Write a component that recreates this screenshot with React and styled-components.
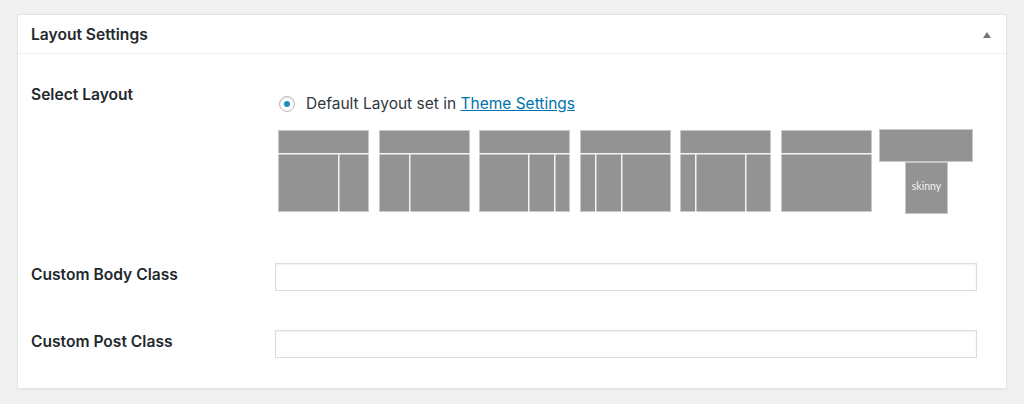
import React from 'react'
import styled, { createGlobalStyle } from 'styled-components'

const GlobalStyle = createGlobalStyle`
  body {
    margin: 0;
    background: #f1f1f1;
    font-family: Inter, "Liberation Sans", Arial, sans-serif;
    color: #23282d;
  }
`

const Page = styled.div`
  padding: 14px 17px 20px 17px;
`

const Panel = styled.div`
  width: 988px;
  background: #fff;
  border: 1px solid #e5e5e5;
  box-shadow: 0 1px 1px rgba(0, 0, 0, 0.04);
`

const Header = styled.div`
  box-sizing: border-box;
  height: 39px;
  display: flex;
  align-items: center;
  justify-content: space-between;
  padding: 2px 15px 0 13px;
  border-bottom: 1px solid #eee;
`

const Title = styled.h2`
  margin: 0;
  font-size: 15.6px;
  font-weight: 600;
  line-height: 20px;
`

const Toggle = styled.span`
  width: 0;
  height: 0;
  border-left: 4px solid transparent;
  border-right: 4px solid transparent;
  border-bottom: 6px solid #72777c;
`

const Body = styled.div`
  padding: 0 30px 30px 13px;
`

const Row = styled.div`
  display: grid;
  grid-template-columns: 244px 1fr;
  align-items: start;
  margin-top: ${ p => p.$top }px;
`

const Label = styled.div`
  font-size: 15.6px;
  font-weight: 600;
  line-height: 20px;
  padding-top: ${ p => p.$pad }px;
`

const Choices = styled.div`
  padding: 40px 0 0 3px;
`

const RadioLine = styled.label`
  display: flex;
  align-items: center;
  gap: 11px;
  font-size: 15.5px;
  line-height: 20px;
  color: #32373c;
`

const Radio = styled.span`
  width: 14px;
  height: 14px;
  margin-left: 1px;
  border: 1px solid #b4b9be;
  border-radius: 50%;
  box-shadow: inset 0 1px 2px rgba(0, 0, 0, 0.1);
  display: flex;
  align-items: center;
  justify-content: center;

  &::after {
    content: '';
    width: 6px;
    height: 6px;
    border-radius: 50%;
    background: #1e8cbe;
  }
`

const Link = styled.a`
  color: #0073aa;
  text-decoration: underline;
`

const Thumbs = styled.div`
  display: flex;
  align-items: flex-start;
  gap: 9.6px;
  margin-top: 16px;
`

const Skinny = styled.svg`
  margin: -1px 0 0 -3px;
`

const Input = styled.input`
  box-sizing: border-box;
  width: 702px;
  height: 28px;
  margin: 0;
  border: 1px solid #ddd;
  box-shadow: inset 0 1px 2px rgba(0, 0, 0, 0.07);
  background: #fff;
`

const GREY = '#939393'
const EDGE = '#c8c8c8'

const layouts = [
  [60],
  [30],
  [49, 75],
  [15, 41],
  [15, 65],
  [],
]

const Thumb = ({ cols }) => (
  <svg width="91" height="82" viewBox="0 0 91 82">
    <rect x="0.5" y="0.5" width="90" height="81" fill={ GREY } stroke={ EDGE } />
    <rect x="0" y="23" width="91" height="1.5" fill="#f4f4f4" />
    { cols.map(c => (
      <rect key={ c } x={ c } y="24" width="1.5" height="58" fill="#f4f4f4" />
    )) }
  </svg>
)

const SkinnyThumb = () => (
  <Skinny width="95" height="85" viewBox="0 0 95 85">
    <rect x="0.5" y="0.5" width="93" height="32" fill={ GREY } stroke={ EDGE } />
    <rect x="26.5" y="33.5" width="42" height="51" fill={ GREY } stroke={ EDGE } />
    <text x="47.5" y="61" textAnchor="middle" fill="#f2f2f2" fontSize="10.5" fontFamily="Lato, sans-serif">skinny</text>
  </Skinny>
)

const App = () => {
  return (
    <Page>
      <GlobalStyle />
      <Panel>
        <Header>
          <Title>Layout Settings</Title>
          <Toggle />
        </Header>
        <Body>
          <Row $top={ 0 }>
            <Label $pad={ 31 }>Select Layout</Label>
            <Choices>
              <RadioLine>
                <Radio />
                <span>Default Layout set in <Link href="#">Theme Settings</Link></span>
              </RadioLine>
              <Thumbs>
                { layouts.map((cols, i) => <Thumb key={ i } cols={ cols } />) }
                <SkinnyThumb />
              </Thumbs>
            </Choices>
          </Row>
          <Row $top={ 49 }>
            <Label $pad={ 2 }>Custom Body Class</Label>
            <Input type="text" />
          </Row>
          <Row $top={ 39 }>
            <Label $pad={ 2 }>Custom Post Class</Label>
            <Input type="text" />
          </Row>
        </Body>
      </Panel>
    </Page>
  )
}

export default App
